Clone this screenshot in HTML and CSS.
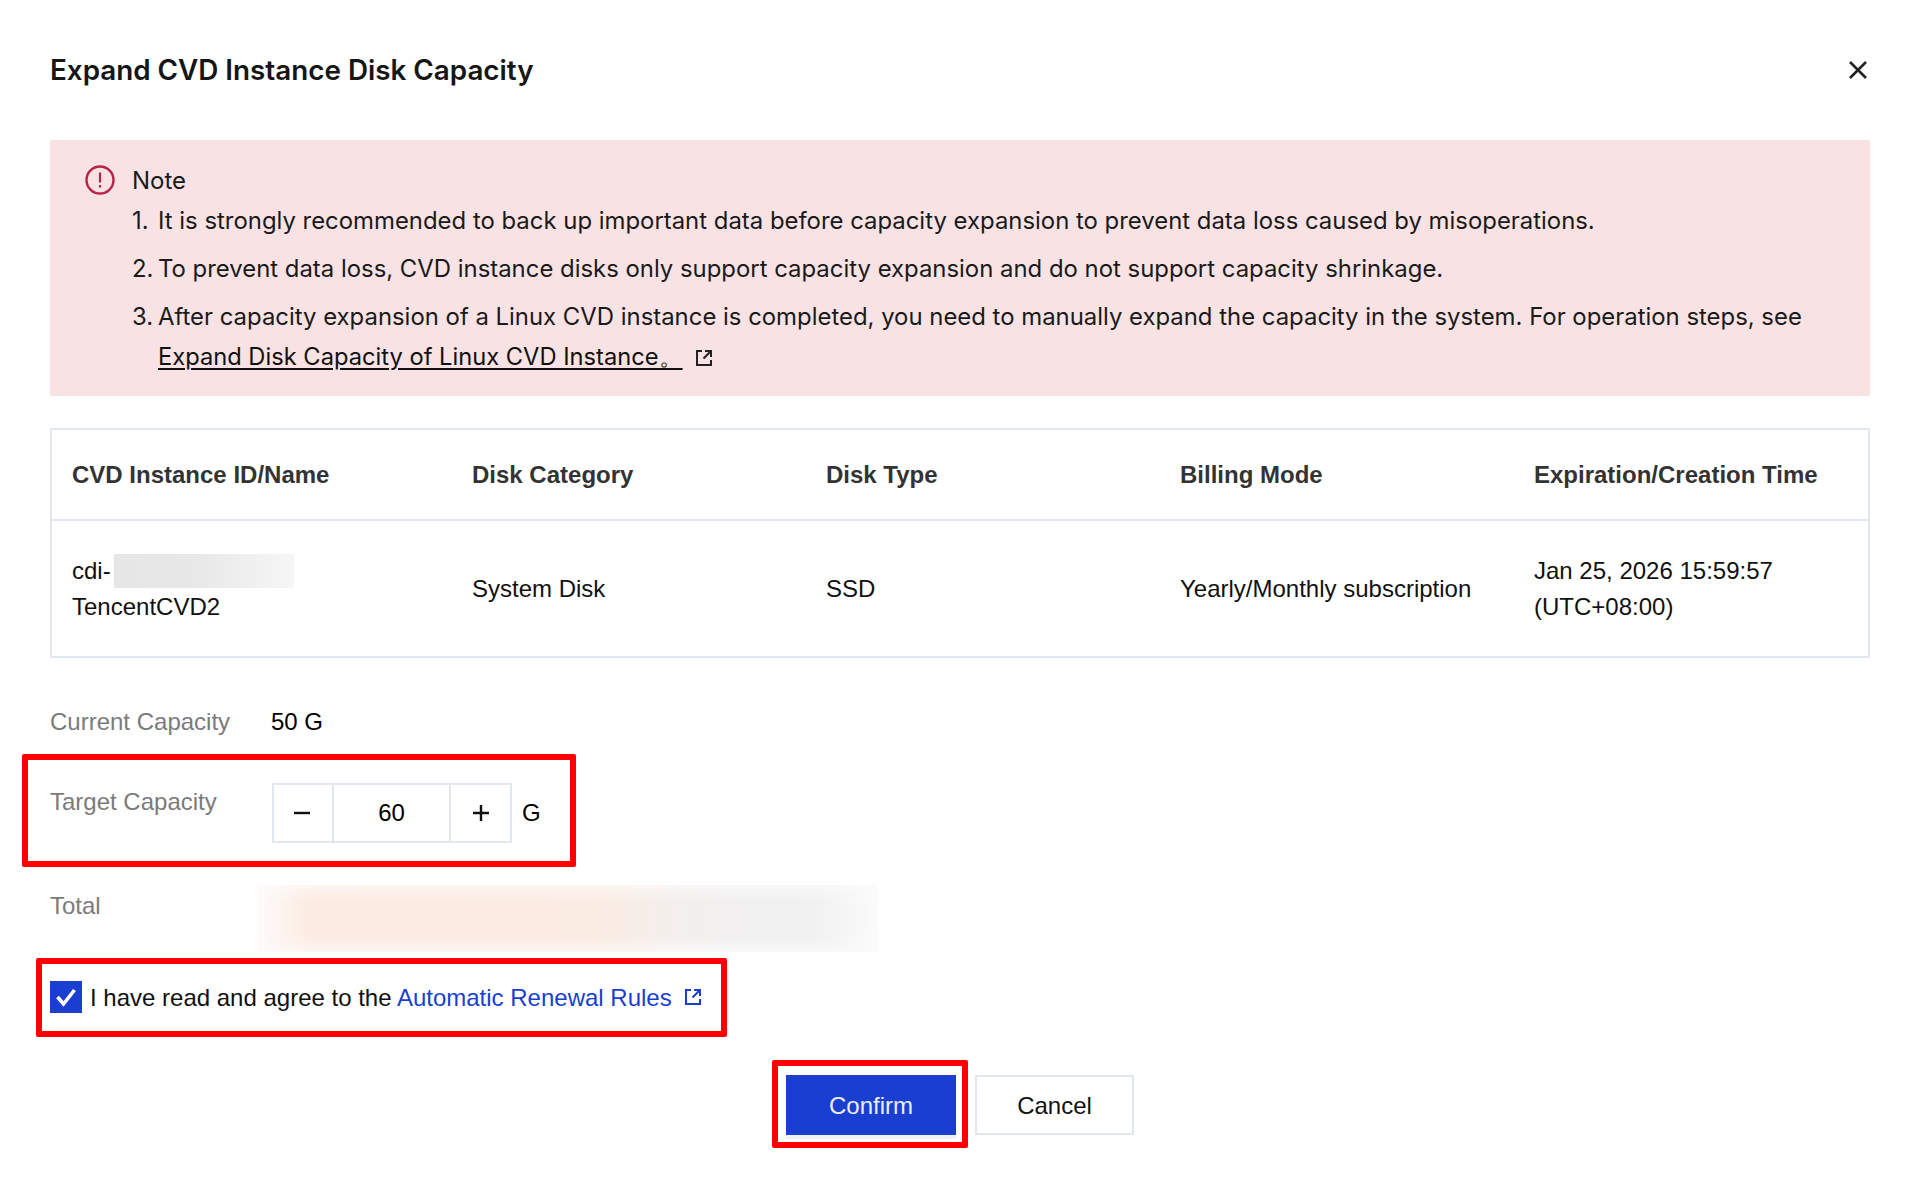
FILE: index.html
```html
<!DOCTYPE html>
<html lang="en">
<head>
<meta charset="utf-8">
<title>Expand CVD Instance Disk Capacity</title>
<link rel="stylesheet" href="styles.css">
</head>
<body>
<div class="dialog">
  <header class="head">
    <h1 class="title">Expand CVD Instance Disk Capacity</h1>
    <svg class="close" width="20" height="20" viewBox="0 0 20 20"><path d="M2 2L18 18M18 2L2 18" stroke="#222" stroke-width="2.6" fill="none"/></svg>
  </header>
  <section class="note">
    <svg class="note-icon" width="30" height="30" viewBox="0 0 30 30"><circle cx="15" cy="15" r="13.5" fill="none" stroke="#b8234a" stroke-width="2.400"/><path d="M15 7.500V17.500M15 20V22.500" stroke="#b8234a" stroke-width="2.200" fill="none"/></svg>
    <div class="note-body">
      <div class="note-title">Note</div>
      <ol class="note-list">
        <li><span class="num">1.</span><span>It is strongly recommended to back up important data before capacity expansion to prevent data loss caused by misoperations.</span></li>
        <li><span class="num">2.</span><span>To prevent data loss, CVD instance disks only support capacity expansion and do not support capacity shrinkage.</span></li>
        <li><span class="num">3.</span><span>After capacity expansion of a Linux CVD instance is completed, you need to manually expand the capacity in the system. For operation steps, see<br><a class="doc-link" href="#">Expand Disk Capacity of Linux CVD Instance。</a><svg class="ext" width="18" height="18" viewBox="0 0 18 18"><path d="M7 2H2V16H16V11M10 2H16V8M16 2L8.500 9.500" stroke="#222" stroke-width="2" fill="none"/></svg></span></li>
      </ol>
    </div>
  </section>
  <div class="table">
    <div class="cell th">CVD Instance ID/Name</div>
    <div class="cell th">Disk Category</div>
    <div class="cell th">Disk Type</div>
    <div class="cell th">Billing Mode</div>
    <div class="cell th">Expiration/Creation Time</div>
    <div class="cell td"><div class="id-line">cdi-<span class="blur-id"></span></div><div>TencentCVD2</div></div>
    <div class="cell td">System Disk</div>
    <div class="cell td">SSD</div>
    <div class="cell td">Yearly/Monthly subscription</div>
    <div class="cell td">Jan 25, 2026 15:59:57<br>(UTC+08:00)</div>
  </div>
  <div class="row current"><span class="label">Current Capacity</span><span class="value">50 G</span></div>
  <div class="row target">
    <span class="mark mark-target"></span>
    <span class="label label-top">Target Capacity</span>
    <div class="stepper"><span class="step step-minus"><svg width="18" height="18" viewBox="0 0 18 18"><path d="M1 9H17" stroke="#111" stroke-width="2.400"/></svg></span><span class="step-value">60</span><span class="step"><svg width="18" height="18" viewBox="0 0 18 18"><path d="M1 9H17M9 1V17" stroke="#111" stroke-width="2.400"/></svg></span></div>
    <span class="unit">G</span>
  </div>
  <div class="row total"><span class="label label-total">Total</span><div class="blur-total"></div></div>
  <div class="agree">
    <span class="mark mark-agree"></span>
    <span class="check"><svg width="32" height="32" viewBox="0 0 32 32"><path d="M7.500 16L13.500 23L24.500 9" stroke="#fff" stroke-width="3.600" fill="none"/></svg></span>
    <span class="agree-text">I have read and agree to the <a class="rule-link" href="#">Automatic Renewal Rules</a></span>
    <svg class="ext ext-blue" width="18" height="18" viewBox="0 0 18 18"><path d="M7 2H2V16H16V11M10 2H16V8M16 2L8.500 9.500" stroke="#1a3fd0" stroke-width="2" fill="none"/></svg>
  </div>
  <div class="actions">
    <span class="mark mark-confirm"></span>
    <button class="btn primary">Confirm</button>
    <button class="btn secondary">Cancel</button>
  </div>
</div>
</body>
</html>
```
FILE: styles.css
```css
* { box-sizing: border-box; }
html, body { margin: 0; padding: 0; background: #fff; }
body { width: 1916px; height: 1180px; overflow: hidden; font-family: "Liberation Sans", Arial, sans-serif; font-size: 24px; color: #000; }
.dialog { position: relative; width: 1916px; height: 1180px; padding: 0 46px 0 50px; }
.head { height: 140px; display: flex; align-items: flex-start; justify-content: space-between; padding-top: 50px; }
.title { margin: 0; font: 600 27.800px/40px Inter, sans-serif; color: #161616; }
.close { margin: 10px 2px 0 0; }
.note { height: 256px; background: #f9e2e3; padding: 25px 0 0 35px; display: flex; font-family: Inter, sans-serif; color: #1a1a1a; }
.note-icon { margin-right: 17px; flex: none; }
.note-body { flex: 1; }
.note-title { font-size: 24px; line-height: 30px; padding-top: 1px; }
.note-list { list-style: none; margin: 5px 0 0; padding: 0; font-size: 23.900px; line-height: 40px; }
.note-list li { display: flex; margin-bottom: 8px; }
.num { flex: none; width: 26px; }
.doc-link { font-size: 23.700px; color: #111; text-decoration: underline; text-underline-offset: 3px; }
.ext { margin-left: 12px; vertical-align: -2px; }
.table { margin-top: 32px; height: 230px; border: 2px solid #e1e6f0; display: grid; grid-template-columns: 400px 354px 354px 354px 1fr; grid-template-rows: 91px 1fr; }
.cell { display: flex; flex-direction: column; justify-content: center; align-items: flex-start; padding-left: 20px; line-height: 36px; }
.th { font-weight: 700; color: #333; border-bottom: 2px solid #e1e6f0; }
.td { color: #111; display: block; align-self: center; }
.id-line { display: flex; align-items: center; }
.blur-id { width: 180px; height: 34px; margin: -4px 0 -4px 3px; background: linear-gradient(90deg, #e6e6e6, #e8e8e8 45%, #f6f6f6); }
.row { display: flex; }
.label { color: #7b7b7b; flex: none; width: 221px; }
.current { margin-top: 46px; height: 36px; align-items: center; }
.value { color: #000; }
.target { position: relative; margin-top: 43px; height: 60px; align-items: center; }
.label-top { align-self: flex-start; margin-top: 1px; line-height: 36px; width: 222px; }
.stepper { width: 240px; height: 60px; border: 2px solid #e1e6f0; display: flex; align-items: stretch; }
.step { flex: none; width: 59px; display: flex; align-items: center; justify-content: center; }
.step-minus { width: 58px; padding-right: 2px; }
.step-value { flex: 1; border-left: 2px solid #e1e6f0; border-right: 2px solid #e1e6f0; text-align: center; line-height: 56px; }
.unit { margin-left: 10px; }
.total { margin-top: 42px; height: 67px; }
.label-total { width: 207px; line-height: 36px; margin-top: 3px; }
.blur-total { width: 621px; height: 67px; background: linear-gradient(90deg, #fdfbfa, #fcebe1 9%, #fbece3 55%, #f2f0ef 70%, #f1f1f1 90%, #fbfbfb); box-shadow: inset 0 0 16px 4px #fcfbfa; }
.agree { position: relative; margin-top: 29px; height: 32px; display: flex; align-items: center; }
.check { width: 32px; height: 32px; background: #1a3fd0; flex: none; }
.agree-text { margin-left: 8px; padding-top: 1px; line-height: 32px; color: #111; }
.rule-link { color: #1a3fd0; text-decoration: none; }
.actions { position: relative; margin-top: 62px; height: 60px; display: flex; gap: 19px; padding-left: 736px; }
.btn { height: 60px; font: 24px "Liberation Sans", Arial, sans-serif; padding: 1px 0 0; border-radius: 0; }
.primary { width: 170px; background: #1a3fd0; color: #e8eeff; border: 0; box-shadow: 0 4px 0 #eef1fa; }
.secondary { width: 159px; background: #fff; color: #111; border: 2px solid #e1e6f0; }
.mark { position: absolute; border: 6px solid #f00; border-radius: 2px; pointer-events: none; }
.mark-target { left: -28px; top: -29px; width: 554px; height: 113px; }
.mark-agree { left: -14px; top: -23px; width: 691px; height: 79px; }
.mark-confirm { left: 722px; top: -15px; width: 196px; height: 88px; }
```
